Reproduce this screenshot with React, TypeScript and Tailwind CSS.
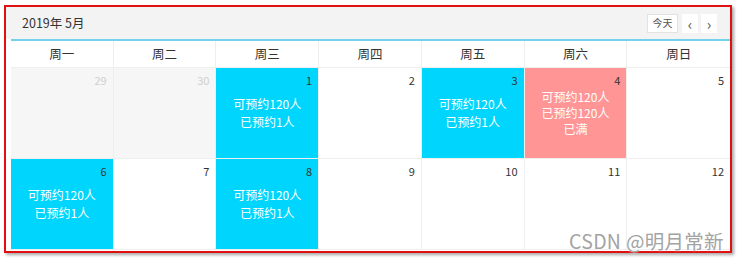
const weekdays = ['周一', '周二', '周三', '周四', '周五', '周六', '周日']

type Day = {
  num: number
  muted?: boolean
  kind?: 'open' | 'full'
  lines?: string[]
}

const rows: Day[][] = [
  [
    { num: 29, muted: true },
    { num: 30, muted: true },
    { num: 1, kind: 'open', lines: ['可预约120人', '已预约1人'] },
    { num: 2 },
    { num: 3, kind: 'open', lines: ['可预约120人', '已预约1人'] },
    { num: 4, kind: 'full', lines: ['可预约120人', '已预约120人', '已满'] },
    { num: 5 },
  ],
  [
    { num: 6, kind: 'open', lines: ['可预约120人', '已预约1人'] },
    { num: 7 },
    { num: 8, kind: 'open', lines: ['可预约120人', '已预约1人'] },
    { num: 9 },
    { num: 10 },
    { num: 11 },
    { num: 12 },
  ],
]

function DayCell({ day, last }: { day: Day; last: boolean }) {
  const bg = day.kind === 'open' ? 'bg-[#00d6fd]' : day.kind === 'full' ? 'bg-[#ff9595]' : day.muted ? 'bg-[#f6f6f6]' : 'bg-white'
  return (
    <div className={`relative h-[91px] border-b border-[#eeeeee] ${last ? '' : 'border-r'} ${bg}`}>
      <div className={`pt-[5px] pr-[6px] text-right text-[11px] leading-[14px] ${day.muted ? 'text-[#cfcfcf]' : 'text-[#333]'}`}>
        {day.num}
      </div>
      {day.lines && (
        <div
          className={`absolute inset-0 flex flex-col items-center justify-center text-[12px] text-white ${
            day.kind === 'full' ? 'leading-[16px]' : 'leading-[18px]'
          }`}
        >
          {day.lines.map((l) => (
            <div key={l}>{l}</div>
          ))}
        </div>
      )}
    </div>
  )
}

export default function App() {
  return (
    <div className="relative w-[737px] h-[262px] bg-white overflow-hidden" style={{ fontFamily: '"Noto Sans CJK SC", "Noto Sans", sans-serif' }}>
      <div className="ml-[4px] mt-[5px] w-[728px] h-[248px] border-2 border-[#e01010] bg-white overflow-hidden shadow-[2px_2px_3px_rgba(0,0,0,0.35)]">
        <div className="flex h-[32px] items-center justify-between bg-[#f3f3f3] pl-[16px] pr-[13px]">
          <span className="text-[12.5px] text-[#333]">2019年 5月</span>
          <div className="flex items-center gap-[2px]">
            <button className="h-[19px] w-[31px] border border-[#e2e2e2] bg-white text-[10px] leading-none text-[#555]">今天</button>
            <button className="ml-[2px] h-[19px] w-[16px] bg-white text-[15px] leading-none text-[#555]">‹</button>
            <button className="ml-[1px] h-[19px] w-[16px] bg-white text-[15px] leading-none text-[#555]">›</button>
          </div>
        </div>
        <div className="ml-[5px]">
          <div className="h-[2px] bg-[#72d2e9]" />
          <div className="grid grid-cols-7 border-b border-[#eeeeee]">
            {weekdays.map((w, i) => (
              <div key={w} className={`h-[26px] flex items-center justify-center text-[12.5px] text-[#333] ${i < 6 ? 'border-r border-[#eeeeee]' : ''}`}>
                {w}
              </div>
            ))}
          </div>
          {rows.map((row, r) => (
            <div key={r} className="grid grid-cols-7">
              {row.map((d, i) => (
                <DayCell key={d.num} day={d} last={i === 6} />
              ))}
            </div>
          ))}
        </div>
      </div>
      <div className="absolute left-[569px] top-[229px] text-[19.5px] leading-[24px] tracking-[0.3px] text-[#a3a3a3] [text-shadow:0_0_2px_#fff]">
        CSDN @明月常新
      </div>
    </div>
  )
}
